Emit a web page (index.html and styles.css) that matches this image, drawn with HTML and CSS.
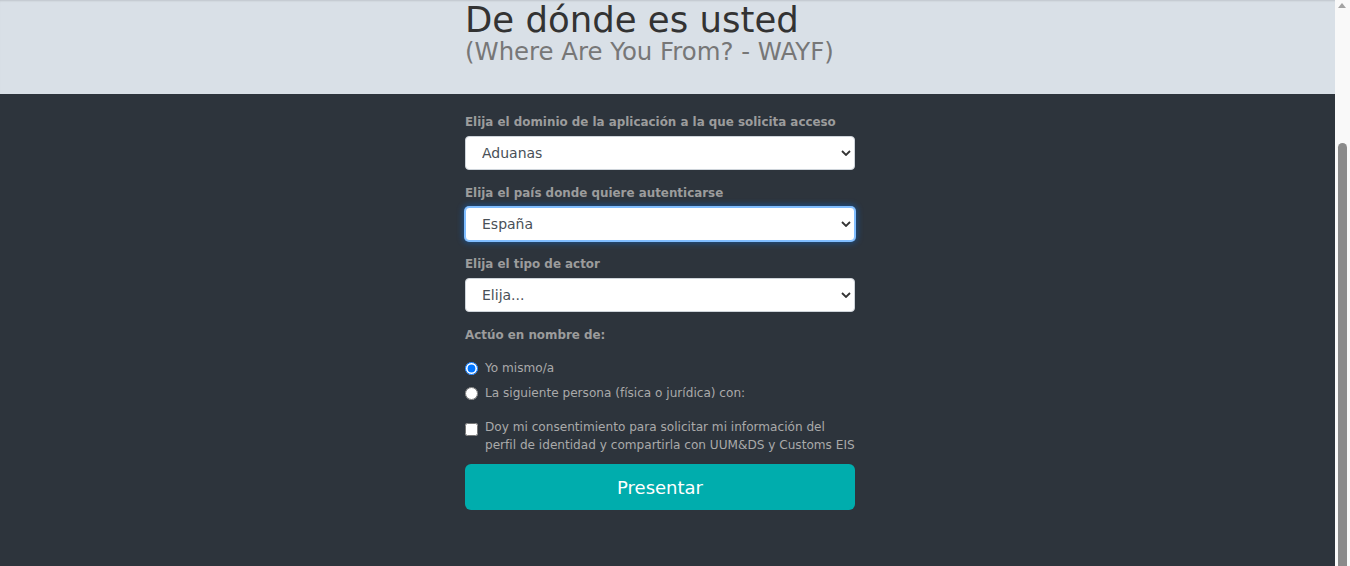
FILE: index.html
```html
<!DOCTYPE html>
<html lang="es">
<head>
    <meta charset="UTF-8">
    <meta name="viewport" content="width=device-width, initial-scale=1.0">
    <title>De dónde es usted - WAYF</title>
    <link rel="stylesheet" href="styles.css">
</head>
<body>

    <header class="page-header">
        <div class="wrap">
            <h1 class="title">De dónde es usted</h1>
            <div class="subtitle">(Where Are You From? - WAYF)</div>
        </div>
    </header>

    <main class="page-main">
        <form class="wrap wayf-form">
            <div class="form-group">
                <label for="domain">Elija el dominio de la aplicación a la que solicita acceso</label>
                <div class="select-box">
                    <select id="domain" class="form-control">
                        <option>Aduanas</option>
                    </select>
                    <svg class="chevron" width="10" height="6" viewBox="0 0 10 6"><path d="M1 1l4 4 4-4" fill="none" stroke="#333" stroke-width="1.8"/></svg>
                </div>
            </div>

            <div class="form-group">
                <label for="country">Elija el país donde quiere autenticarse</label>
                <div class="select-box">
                    <select id="country" class="form-control focused">
                        <option>España</option>
                    </select>
                    <svg class="chevron" width="10" height="6" viewBox="0 0 10 6"><path d="M1 1l4 4 4-4" fill="none" stroke="#333" stroke-width="1.8"/></svg>
                </div>
            </div>

            <div class="form-group">
                <label for="actor">Elija el tipo de actor</label>
                <div class="select-box">
                    <select id="actor" class="form-control">
                        <option>Elija...</option>
                    </select>
                    <svg class="chevron" width="10" height="6" viewBox="0 0 10 6"><path d="M1 1l4 4 4-4" fill="none" stroke="#333" stroke-width="1.8"/></svg>
                </div>
            </div>

            <div class="group-title">Actúo en nombre de:</div>

            <div class="choices">
                <label class="choice"><input type="radio" name="behalf" checked> Yo mismo/a</label>
                <label class="choice"><input type="radio" name="behalf"> La siguiente persona (física o jurídica) con:</label>
            </div>

            <label class="consent">
                <input type="checkbox">
                <span>Doy mi consentimiento para solicitar mi información del<br>perfil de identidad y compartirla con UUM&amp;DS y Customs EIS</span>
            </label>

            <button type="button" class="btn-submit">Presentar</button>
        </form>
    </main>

    <!-- window scrollbar, page shown scrolled to the bottom -->
    <div class="scrollbar">
        <span class="scroll-arrow"></span>
        <span class="scroll-thumb"></span>
    </div>

</body>
</html>
```

FILE: styles.css
```css
html, body {
    margin: 0;
    padding: 0;
    height: 100%;
    overflow: hidden;
}
body {
    font-family: "DejaVu Sans", Verdana, sans-serif;
    background-color: #2d343c;
    color: #aaa;
}
.wrap {
    width: 390px;
    margin: 0 auto;
    padding-right: 30px;
}
.page-header {
    background-color: #d9e0e7;
    height: 94px;
    box-shadow: inset 0 2px 2px -1px rgba(0, 0, 0, 0.12);
}
.title {
    margin: 0;
    padding-top: 1px;
    font-size: 35.5px;
    font-weight: normal;
    line-height: 38px;
    color: #333;
    white-space: nowrap;
}
.subtitle {
    font-size: 24.4px;
    line-height: 26px;
    color: #777;
    white-space: nowrap;
}
.page-main {
    padding: 19px 0 56px;
}
.form-group {
    margin-bottom: 14px;
}
.form-group label, .group-title {
    display: block;
    font-size: 11.9px;
    font-weight: bold;
    line-height: 18px;
    color: #9c9c9c;
    margin-bottom: 5px;
    white-space: nowrap;
}
.group-title {
    margin-bottom: 14px;
}
.select-box {
    position: relative;
}
.form-control {
    display: block;
    width: 100%;
    height: 34px;
    box-sizing: border-box;
    padding: 0 30px 0 16px;
    font-family: inherit;
    font-size: 14px;
    color: #495057;
    background-color: #fff;
    border: 1px solid #ced4da;
    border-radius: 4px;
    appearance: none;
    -webkit-appearance: none;
}
.form-control.focused {
    border-color: #80bdff;
    box-shadow: 0 0 0 1px #80bdff, 0 0 6px 2px rgba(0, 123, 255, 0.4);
}
.chevron {
    position: absolute;
    right: 4px;
    top: 14px;
    pointer-events: none;
}
.choices {
    margin-bottom: 15px;
}
.choice {
    display: flex;
    align-items: center;
    gap: 7px;
    font-size: 12.1px;
    line-height: 20px;
    margin-bottom: 5px;
    color: #aaa;
    white-space: nowrap;
}
.choice input, .consent input {
    width: 13px;
    height: 13px;
    margin: 0;
    flex-shrink: 0;
}
.consent {
    display: flex;
    align-items: flex-start;
    gap: 7px;
    font-size: 12.1px;
    line-height: 18px;
    color: #aaa;
    margin-bottom: 10px;
    white-space: nowrap;
}
.consent input {
    margin-top: 5px;
}
.btn-submit {
    display: block;
    width: 100%;
    height: 46px;
    font-family: inherit;
    font-size: 18px;
    color: #fff;
    background-color: #00adad;
    border: none;
    border-radius: 6px;
    cursor: pointer;
}

/* fake window scrollbar */
.scrollbar {
    position: fixed;
    top: 0;
    right: 0;
    width: 15px;
    height: 100%;
    background-color: #f9f9f9;
}
.scroll-arrow {
    position: absolute;
    top: 3px;
    left: 3px;
    border-left: 4.5px solid transparent;
    border-right: 4.5px solid transparent;
    border-bottom: 5px solid #a3a3a3;
}
.scroll-thumb {
    position: absolute;
    top: 143px;
    bottom: 0;
    left: 3px;
    width: 9px;
    border-radius: 4.5px 4.5px 0 0;
    background-color: #8a8a8a;
}
```
